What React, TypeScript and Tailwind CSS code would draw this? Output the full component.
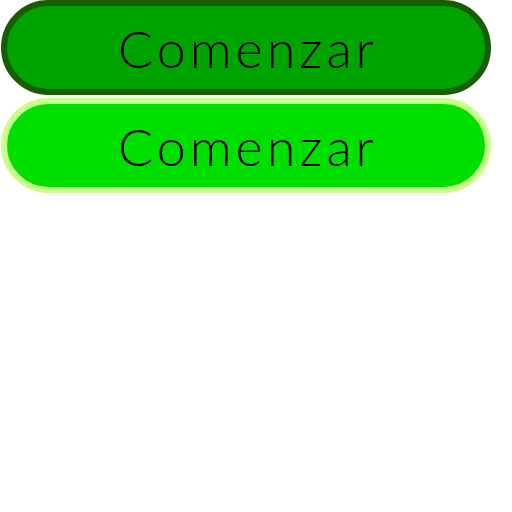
export default function App() {
    return (
        <main className="w-[512px] h-[512px] bg-white">
            <div className="flex flex-col gap-[3px] pl-px w-[491px]">
                <button className="h-[95px] rounded-full border-[6px] border-[#1a5c00] bg-[#00a400] flex items-center justify-center">
                    <span className="text-[52px] leading-none tracking-[4px] pl-[4px] text-black font-['Lato',sans-serif] font-light">Comenzar</span>
                </button>
                <button className="h-[95px] rounded-full border-[6px] border-[#c8ff8a] bg-[#00e000] flex items-center justify-center">
                    <span className="text-[52px] leading-none tracking-[4px] pl-[4px] text-black font-['Lato',sans-serif] font-light">Comenzar</span>
                </button>
            </div>
        </main>
    )
}
